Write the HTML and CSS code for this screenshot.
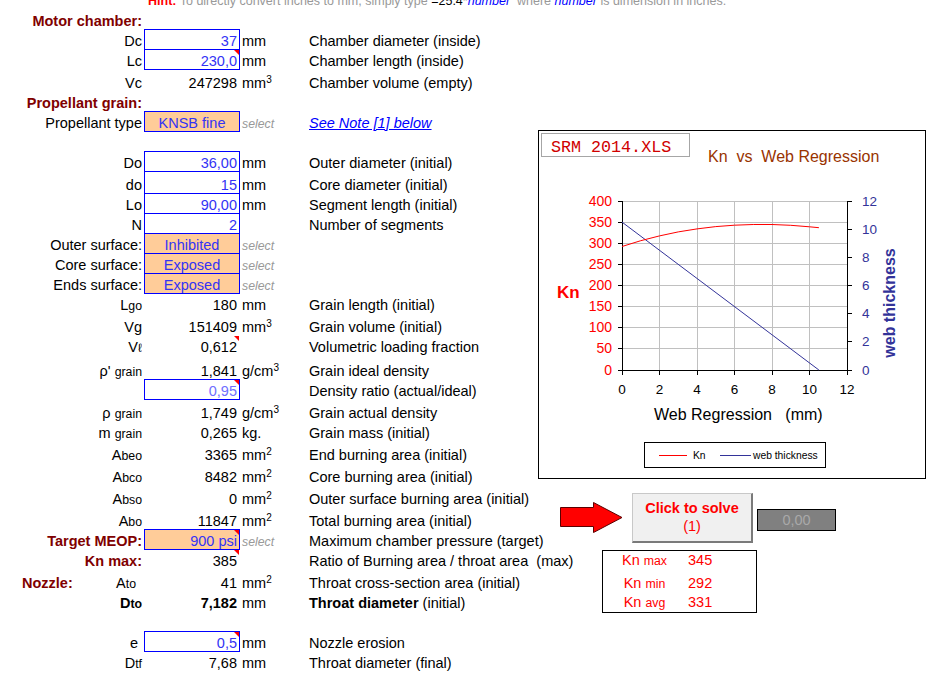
FILE: index.html
```html
<!DOCTYPE html>
<html lang="en">
<head>
    <meta charset="UTF-8">
    <title>SRM 2014 - Motor design</title>
    <link rel="stylesheet" href="styles.css">
</head>
<body>
<div class="page">
    <!-- input / result sheet -->
    <div class="sheet">
        <div class="hint"><b>Hint:</b> To directly convert inches to mm, simply type <span class="hint-k">=25.4*</span><i>number</i>&nbsp; where <i>number</i> is dimension in inches.</div>

        <div class="row"><div class="lbl head">Motor chamber:</div></div>
        <div class="row">
            <div class="lbl">Dc</div><div class="box">37</div><div class="unit">mm</div><div class="desc">Chamber diameter (inside)</div>
        </div>
        <div class="row">
            <div class="lbl">Lc</div><div class="box">230,0<i class="flag"></i></div><div class="unit">mm</div><div class="desc">Chamber length (inside)</div>
        </div>
        <div class="row tall">
            <div class="lbl">Vc</div><div class="val">247298</div><div class="unit">mm<sup>3</sup></div><div class="desc">Chamber volume (empty)</div>
        </div>
        <div class="row"><div class="lbl head">Propellant grain:</div></div>
        <div class="row">
            <div class="lbl">Propellant type</div><div class="box fill">KNSB fine</div><div class="unit sel">select</div><div class="desc"><a class="note">See Note [1] below</a></div>
        </div>
        <div class="row"></div>
        <div class="row">
            <div class="lbl">Do</div><div class="box">36,00</div><div class="unit">mm</div><div class="desc">Outer diameter (initial)</div>
        </div>
        <div class="row tall">
            <div class="lbl">do</div><div class="box">15</div><div class="unit">mm</div><div class="desc">Core diameter (initial)</div>
        </div>
        <div class="row">
            <div class="lbl">Lo</div><div class="box">90,00</div><div class="unit">mm</div><div class="desc">Segment length (initial)</div>
        </div>
        <div class="row">
            <div class="lbl">N</div><div class="box">2</div><div class="unit"></div><div class="desc">Number of segments</div>
        </div>
        <div class="row">
            <div class="lbl">Outer surface:</div><div class="box fill">Inhibited</div><div class="unit sel">select</div>
        </div>
        <div class="row">
            <div class="lbl">Core surface:</div><div class="box fill">Exposed</div><div class="unit sel">select</div>
        </div>
        <div class="row">
            <div class="lbl">Ends surface:</div><div class="box fill">Exposed</div><div class="unit sel">select</div>
        </div>
        <div class="row">
            <div class="lbl">L<span class="sub">go</span></div><div class="val">180</div><div class="unit">mm</div><div class="desc">Grain length (initial)</div>
        </div>
        <div class="row tall">
            <div class="lbl">Vg</div><div class="val">151409</div><div class="unit">mm<sup>3</sup></div><div class="desc">Grain volume (initial)</div>
        </div>
        <div class="row">
            <div class="lbl">V<span class="sub cut">ℓ</span></div><div class="val">0,612<i class="flag"></i></div><div class="unit"></div><div class="desc">Volumetric loading fraction</div>
        </div>
        <div class="row xtall">
            <div class="lbl">ρ' <span class="sub">grain</span></div><div class="val">1,841</div><div class="unit">g/cm<sup>3</sup></div><div class="desc">Grain ideal density</div>
        </div>
        <div class="row">
            <div class="lbl"></div><div class="box light">0,95<i class="flag"></i></div><div class="unit"></div><div class="desc">Density ratio (actual/ideal)</div>
        </div>
        <div class="row tall">
            <div class="lbl">ρ <span class="sub">grain</span></div><div class="val">1,749</div><div class="unit">g/cm<sup>3</sup></div><div class="desc">Grain actual density</div>
        </div>
        <div class="row">
            <div class="lbl">m <span class="sub">grain</span></div><div class="val">0,265</div><div class="unit">kg.</div><div class="desc">Grain mass (initial)</div>
        </div>
        <div class="row tall">
            <div class="lbl">A<span class="sub">beo</span></div><div class="val">3365</div><div class="unit">mm<sup>2</sup></div><div class="desc">End burning area (initial)</div>
        </div>
        <div class="row tall">
            <div class="lbl">A<span class="sub">bco</span></div><div class="val">8482</div><div class="unit">mm<sup>2</sup></div><div class="desc">Core burning area (initial)</div>
        </div>
        <div class="row tall">
            <div class="lbl">A<span class="sub">bso</span></div><div class="val">0</div><div class="unit">mm<sup>2</sup></div><div class="desc">Outer surface burning area (initial)</div>
        </div>
        <div class="row tall">
            <div class="lbl">A<span class="sub">bo</span></div><div class="val">11847</div><div class="unit">mm<sup>2</sup></div><div class="desc">Total burning area (initial)</div>
        </div>
        <div class="row">
            <div class="lbl head">Target MEOP:</div><div class="box fill right">900 psi<i class="flag"></i></div><div class="unit sel">select</div><div class="desc">Maximum chamber pressure (target)</div>
        </div>
        <div class="row">
            <div class="lbl head">Kn max:</div><div class="val">385<i class="flag"></i></div><div class="unit"></div><div class="desc">Ratio of Burning area / throat area &nbsp;(max)</div>
        </div>
        <div class="row tall">
            <div class="lbl split"><span class="head">Nozzle:</span><span class="ato">A<span class="sub">to</span></span></div><div class="val">41</div><div class="unit">mm<sup>2</sup></div><div class="desc">Throat cross-section area (initial)</div>
        </div>
        <div class="row">
            <div class="lbl strong">D<span class="sub">to</span></div><div class="val strong">7,182</div><div class="unit">mm</div><div class="desc"><b>Throat diameter</b> (initial)</div>
        </div>
        <div class="row"></div>
        <div class="row">
            <div class="lbl short">e</div><div class="box">0,5<i class="flag"></i></div><div class="unit">mm</div><div class="desc">Nozzle erosion</div>
        </div>
        <div class="row">
            <div class="lbl">D<span class="sub">tf</span></div><div class="val">7,68</div><div class="unit">mm</div><div class="desc">Throat diameter (final)</div>
        </div>
    </div>

    <!-- chart and solver -->
    <div class="side">
        <div class="chart">
            <svg width="389" height="349" viewBox="0 0 389 349">
                <rect x="0.5" y="0.5" width="387" height="348" fill="#fff" stroke="#000"/>
                <rect x="3.5" y="3.5" width="148" height="23" fill="#fff" stroke="#a6a6a6"/>
                <text class="srm" x="13" y="22">SRM 2014.XLS</text>
                <text class="title" x="170" y="32">Kn&#160; vs&#160; Web Regression</text>

                <!-- grid -->
                <g stroke="#c0c0c0" stroke-width="1">
                    <line x1="84" y1="71.5" x2="309" y2="71.5"/>
                    <line x1="84" y1="92.5" x2="309" y2="92.5"/>
                    <line x1="84" y1="113.5" x2="309" y2="113.5"/>
                    <line x1="84" y1="134.5" x2="309" y2="134.5"/>
                    <line x1="84" y1="155.5" x2="309" y2="155.5"/>
                    <line x1="84" y1="176.5" x2="309" y2="176.5"/>
                    <line x1="84" y1="197.5" x2="309" y2="197.5"/>
                    <line x1="84" y1="218.5" x2="309" y2="218.5"/>
                    <line x1="121.5" y1="71" x2="121.5" y2="240"/>
                    <line x1="159.5" y1="71" x2="159.5" y2="240"/>
                    <line x1="196.5" y1="71" x2="196.5" y2="240"/>
                    <line x1="234.5" y1="71" x2="234.5" y2="240"/>
                    <line x1="271.5" y1="71" x2="271.5" y2="240"/>
                </g>

                <!-- axes and ticks -->
                <g stroke="#000" stroke-width="1">
                    <line x1="84.5" y1="71" x2="84.5" y2="241"/>
                    <line x1="309.5" y1="71" x2="309.5" y2="241"/>
                    <line x1="84" y1="240.5" x2="310" y2="240.5"/>
                    <path d="M80 71.5H84M80 92.5H84M80 113.5H84M80 134.5H84M80 155.5H84M80 176.5H84M80 197.5H84M80 218.5H84M80 240.5H84"/>
                    <path d="M310 71.5H314M310 99.5H314M310 127.5H314M310 155.5H314M310 183.5H314M310 211.5H314M310 240.5H314"/>
                    <path d="M84.5 241V245M121.5 241V245M159.5 241V245M196.5 241V245M234.5 241V245M271.5 241V245M309.5 241V245"/>
                </g>

                <g class="ax-left">
                    <text x="74" y="76">400</text>
                    <text x="74" y="97">350</text>
                    <text x="74" y="118">300</text>
                    <text x="74" y="139">250</text>
                    <text x="74" y="160">200</text>
                    <text x="74" y="181">150</text>
                    <text x="74" y="202">100</text>
                    <text x="74" y="223">50</text>
                    <text x="74" y="245">0</text>
                </g>
                <g class="ax-right">
                    <text x="324" y="76">12</text>
                    <text x="324" y="104">10</text>
                    <text x="324" y="132">8</text>
                    <text x="324" y="160">6</text>
                    <text x="324" y="188">4</text>
                    <text x="324" y="216">2</text>
                    <text x="324" y="245">0</text>
                </g>
                <g class="ax-bottom">
                    <text x="84" y="264">0</text>
                    <text x="121.5" y="264">2</text>
                    <text x="159" y="264">4</text>
                    <text x="196.5" y="264">6</text>
                    <text x="234" y="264">8</text>
                    <text x="271.5" y="264">10</text>
                    <text x="309" y="264">12</text>
                </g>

                <text class="kn-title" x="19" y="168">Kn</text>
                <text class="web-title" x="357" y="173" transform="rotate(-90 357 173)">web thickness</text>
                <text class="x-title" x="116" y="290">Web Regression&#160;&#160; (mm)</text>

                <!-- series -->
                <polyline fill="none" stroke="#333399" stroke-width="1" points="84,92.1 280.9,240"/>
                <polyline fill="none" stroke="#ff0000" stroke-width="1" points="84,116.5 102.75,110.7 121.5,105.9 140.25,101.9 159,98.9 177.75,96.6 196.5,95.2 215.25,94.5 234,94.5 252.75,95.3 271.5,96.8 280.9,97.7"/>

                <!-- legend -->
                <rect x="106.5" y="312.5" width="181" height="25" fill="#fff" stroke="#000"/>
                <line x1="121" y1="325.5" x2="149" y2="325.5" stroke="#ff0000"/>
                <text class="legend" x="155" y="329">Kn</text>
                <line x1="182" y1="325.5" x2="213" y2="325.5" stroke="#333399"/>
                <text class="legend" x="215" y="329">web thickness</text>
            </svg>
        </div>

        <div class="solve">
            <svg class="arrow" width="63" height="31" viewBox="0 0 63 31">
                <polygon points="0.5,5.5 33.5,5.5 33.5,0.5 62,15.5 33.5,30.5 33.5,24.5 0.5,24.5" fill="#ff0000" stroke="#5a0000" stroke-width="1"/>
            </svg>
            <div class="btn">
                <div class="btn-main">Click to solve</div>
                <div>(1)</div>
            </div>
            <div class="readout">0,00</div>
        </div>

        <div class="kn-box">
            <div class="kn-l">Kn <span class="sub">max</span></div><div class="kn-v">345</div>
            <div class="kn-l">Kn <span class="sub">min</span></div><div class="kn-v">292</div>
            <div class="kn-l">Kn <span class="sub">avg</span></div><div class="kn-v">331</div>
        </div>
    </div>
</div>
</body>
</html>
```

FILE: styles.css
```css
body {
    margin: 0;
    font-family: "Liberation Sans", Arial, sans-serif;
    font-size: 14.5px;
    color: #000;
    background: #fff;
    overflow: hidden;
}

.page {
    display: flex;
    height: 680px;
}

/* ---- sheet ---- */
.sheet {
    width: 538px;
    flex: none;
    margin-top: -11px;
}

.hint {
    height: 20px;
    box-sizing: border-box;
    padding: 5px 0 0 148px;
    line-height: 14px;
    font-size: 12.5px;
    color: #999;
    white-space: nowrap;
}

.hint b { color: #ff0000; }
.hint i { color: #0000ff; }
.hint-k { color: #000; }

.row {
    display: grid;
    grid-template-columns: 144px 96px 69px auto;
    grid-template-rows: 100%;
    height: 20px;
    align-items: end;
    white-space: nowrap;
}

.row.tall { height: 22px; }
.row.xtall { height: 24px; }

.lbl {
    text-align: right;
    padding-right: 2px;
}

.head {
    font-weight: bold;
    color: #800000;
}

.strong { font-weight: bold; }

.sub { font-size: 12.3px; }

.cut {
    display: inline-block;
    width: 4px;
    overflow: hidden;
    vertical-align: bottom;
}

.split {
    display: flex;
    justify-content: space-between;
    padding-left: 22px;
}

.ato { padding-right: 6px; }
.short { padding-right: 6px; }

.val {
    align-self: stretch;
    display: flex;
    align-items: flex-end;
    justify-content: flex-end;
    padding-right: 3px;
    position: relative;
}

.box {
    align-self: start;
    height: 21px;
    box-sizing: border-box;
    border: 1px solid #0000ff;
    display: flex;
    align-items: flex-end;
    justify-content: flex-end;
    padding-right: 2px;
    color: #3333f5;
    position: relative;
}

.tall .box { height: 23px; }

.box.fill {
    background: #ffcc99;
    justify-content: center;
    padding-right: 0;
}

.box.fill.right {
    justify-content: flex-end;
    padding-right: 2px;
}

.box.light { color: #7070ff; }

/* cell comment marker */
.flag {
    position: absolute;
    top: 0;
    right: 0;
    width: 0;
    height: 0;
    border-top: 5px solid #ff0000;
    border-left: 5px solid transparent;
}

.val .flag { top: 1px; right: 1px; }

.unit { padding-left: 2px; }

sup {
    font-size: 10px;
    vertical-align: 5px;
    line-height: 0;
}

.sel {
    font-style: italic;
    font-size: 12.3px;
    color: #999;
}

.note {
    color: #0000ff;
    font-style: italic;
    text-decoration: underline;
}

/* ---- chart + solver column ---- */
.side {
    flex: none;
    width: 400px;
    padding-top: 130px;
}

.chart {
    width: 389px;
    height: 349px;
}

.chart svg { display: block; }

.srm {
    font-family: "Liberation Mono", "DejaVu Sans Mono", monospace;
    font-size: 16.7px;
    fill: #d00000;
}

.title {
    font-size: 16px;
    fill: #993300;
}

.ax-left text {
    font-size: 14px;
    fill: #ff0000;
    text-anchor: end;
}

.ax-right text {
    font-size: 13.5px;
    fill: #333399;
}

.ax-bottom text {
    font-size: 13.5px;
    fill: #000;
    text-anchor: middle;
}

.kn-title {
    font-size: 17px;
    font-weight: bold;
    fill: #ff0000;
}

.web-title {
    font-size: 16px;
    font-weight: bold;
    fill: #333399;
    text-anchor: middle;
}

.x-title {
    font-size: 16px;
    fill: #000;
}

.legend {
    font-size: 10.3px;
    fill: #000;
}

.solve {
    display: flex;
    align-items: flex-start;
    margin-top: 14px;
    height: 50px;
}

.arrow {
    display: block;
    margin: 9px 0 0 22px;
}

.btn {
    margin-left: 9px;
    width: 121px;
    height: 50px;
    box-sizing: border-box;
    padding-top: 5px;
    background: #f0f0f0;
    border-top: 1px solid #c8c8c8;
    border-left: 1px solid #c8c8c8;
    border-right: 2px solid #7a7a7a;
    border-bottom: 2px solid #7a7a7a;
    text-align: center;
    line-height: 18px;
    color: #ff0000;
}

.btn-main { font-weight: bold; }

.readout {
    margin: 16px 0 0 4px;
    width: 79px;
    height: 22px;
    box-sizing: border-box;
    border: 1px solid #000;
    background: #808080;
    color: #a9a9a9;
    text-align: center;
    line-height: 20px;
}

.kn-box {
    margin: 7px 0 0 64px;
    width: 155px;
    height: 63px;
    box-sizing: border-box;
    border: 1px solid #000;
    display: grid;
    grid-template-columns: 83px auto;
    grid-template-rows: 17px 23px 19px;
    align-items: end;
    color: #ff0000;
}

.kn-l { text-align: center; }
.kn-v { padding-left: 2px; }
```
